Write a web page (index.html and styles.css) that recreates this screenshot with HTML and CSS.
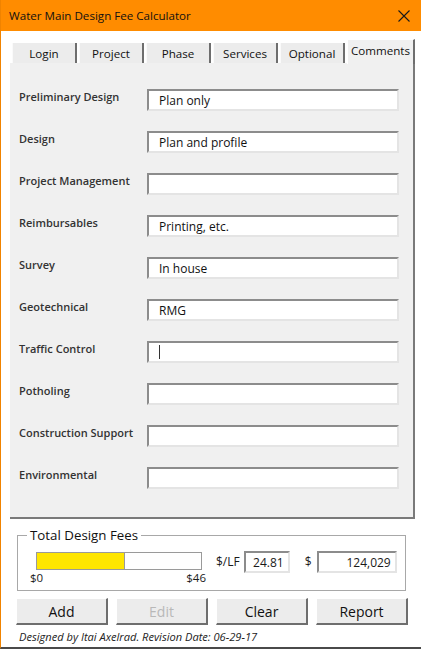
FILE: index.html
```html
<!DOCTYPE html>
<html>
<head>
  <title>Water Main Design Fee Calculator</title>
  <link rel="stylesheet" href="styles.css">
</head>
<body>
  <div class="window">
    <header class="titlebar">
      <span class="title">Water Main Design Fee Calculator</span>
      <svg class="close" width="12" height="12" viewBox="0 0 12 12">
        <path d="M0.5 0.5 L11.5 11.5 M11.5 0.5 L0.5 11.5" stroke="#1a1a1a" stroke-width="1.1" fill="none"/>
      </svg>
    </header>

    <main class="content">
      <nav class="tabs">
        <div class="tab">Login</div>
        <div class="tab">Project</div>
        <div class="tab">Phase</div>
        <div class="tab">Services</div>
        <div class="tab">Optional</div>
        <div class="tab active">Comments</div>
      </nav>

      <section class="panel">
        <div class="row"><label>Preliminary Design</label><div class="field">Plan only</div></div>
        <div class="row"><label>Design</label><div class="field">Plan and profile</div></div>
        <div class="row"><label>Project Management</label><div class="field"></div></div>
        <div class="row"><label>Reimbursables</label><div class="field">Printing, etc.</div></div>
        <div class="row"><label>Survey</label><div class="field">In house</div></div>
        <div class="row"><label>Geotechnical</label><div class="field">RMG</div></div>
        <div class="row"><label>Traffic Control</label><div class="field"><span class="caret"></span></div></div>
        <div class="row"><label>Potholing</label><div class="field"></div></div>
        <div class="row"><label>Construction Support</label><div class="field"></div></div>
        <div class="row"><label>Environmental</label><div class="field"></div></div>
      </section>

      <fieldset class="totals">
        <legend>Total Design Fees</legend>
        <div class="totals-row">
          <div class="meter">
            <div class="bar"><div class="fill" style="width: 53%"></div></div>
            <div class="scale"><span>$0</span><span>$46</span></div>
          </div>
          <span class="unit">$/LF</span>
          <div class="value small">24.81</div>
          <span class="unit dollar">$</span>
          <div class="value big">124,029</div>
        </div>
      </fieldset>

      <div class="buttons">
        <button type="button">Add</button>
        <button type="button" class="disabled">Edit</button>
        <button type="button">Clear</button>
        <button type="button">Report</button>
      </div>

      <p class="credit">Designed by Itai Axelrad. Revision Date: 06-29-17</p>
    </main>
  </div>
</body>
</html>
```

FILE: styles.css
```css
body {
  margin: 0;
  padding: 0;
  font-family: "Open Sans", "Noto Sans", sans-serif;
  color: #1a1a1a;
  background: #fff;
}

.window {
  width: 420px;
  height: 647px;
  border-left: 1px solid #f08300;
  border-bottom: 2px solid #4a4a4a;
  background: #fff;
  overflow: hidden;
}

.titlebar {
  height: 31px;
  background-color: #ff8c00;
  display: flex;
  align-items: center;
  justify-content: space-between;
  padding: 0 11px 0 8px;
}

.title {
  font-size: 11.6px;
  color: #111;
}

.close {
  display: block;
}

.content {
  padding: 9px 0 0 9px;
}

/* tab strip */
.tabs {
  display: flex;
  align-items: flex-end;
  height: 23px;
  padding-left: 2px;
  gap: 2px;
}

.tab {
  width: 62px;
  height: 20px;
  background: #ececec;
  border-right: 2px solid #6e6e6e;
  border-left: 1px solid #fafafa;
  font-size: 11.6px;
  line-height: 22px;
  text-align: center;
  color: #111;
}

.tab.active {
  height: 24px;
  line-height: 21px;
  width: 65px;
  background: #f0f0f0;
  border-left: 1px solid #fff;
  border-top: 1px solid #fff;
  position: relative;
  top: 1px;
}

/* page of the tab control */
.panel {
  width: 403px;
  background: #f0f0f0;
  border-right: 2px solid #7a7a7a;
  border-bottom: 2px solid #7a7a7a;
  padding: 26px 0 28px 0;
  display: flex;
  flex-direction: column;
  gap: 20px;
}

.row {
  display: flex;
  align-items: flex-start;
}

.row label {
  width: 128px;
  padding-left: 9px;
  font-size: 11px;
  font-weight: 600;
  line-height: 16px;
  color: #333;
}

.field {
  width: 238px;
  height: 18px;
  background: #fff;
  border-top: 2px solid #8c8c8c;
  border-left: 2px solid #8c8c8c;
  border-right: 2px solid #e4e4e4;
  border-bottom: 2px solid #e4e4e4;
  font-size: 12px;
  line-height: 19px;
  padding-left: 10px;
  color: #111;
}

.caret {
  display: inline-block;
  width: 1px;
  height: 14px;
  background: #333;
  margin-top: 2px;
}

/* totals frame */
.totals {
  margin: 8px 0 0 7px;
  width: 389px;
  padding: 0 0 4px 0;
  border: 1px solid #a8a8a8;
  box-sizing: border-box;
  height: 64px;
}

.totals legend {
  margin-left: 9px;
  padding: 0 3px;
  font-size: 13.3px;
  line-height: 16px;
  color: #111;
}

.totals-row {
  display: flex;
  align-items: flex-start;
  padding-top: 9px;
}

.meter {
  width: 176px;
  margin-left: 12px;
}

.bar {
  margin-left: 6px;
  width: 164px;
  height: 16px;
  border: 1px solid #9a9a9a;
  background: #fff;
}

.fill {
  height: 100%;
  background: #ffe600;
  border-right: 1px solid #9a9a9a;
}

.scale {
  display: flex;
  justify-content: space-between;
  font-size: 11.5px;
  line-height: 14px;
  margin-top: 1px;
}

.unit {
  font-size: 12px;
  margin-left: 10px;
  line-height: 22px;
  margin-top: -1px;
}

.dollar {
  margin-left: 15px;
  width: 8px;
}

.value {
  height: 18px;
  margin-top: -1px;
  background: #fff;
  border-top: 2px solid #8c8c8c;
  border-left: 2px solid #8c8c8c;
  border-right: 2px solid #e4e4e4;
  border-bottom: 2px solid #e4e4e4;
  font-size: 12px;
  line-height: 19px;
  text-align: right;
  padding-right: 4px;
  margin-left: 4px;
}

.value.small {
  width: 38px;
}

.value.big {
  width: 72px;
}

/* command buttons */
.buttons {
  display: flex;
  gap: 8px;
  margin: 7px 0 0 6px;
}

button {
  width: 92px;
  height: 27px;
  background: #ececec;
  border-top: 1px solid #fff;
  border-left: 1px solid #fff;
  border-right: 2px solid #6e6e6e;
  border-bottom: 2px solid #6e6e6e;
  font-family: "Open Sans", "Noto Sans", sans-serif;
  font-size: 14px;
  color: #111;
  padding: 0;
}

button.disabled {
  color: #b8b8b8;
}

.credit {
  margin: 4px 0 0 9px;
  font-size: 11.1px;
  font-style: italic;
  color: #222;
}
```
